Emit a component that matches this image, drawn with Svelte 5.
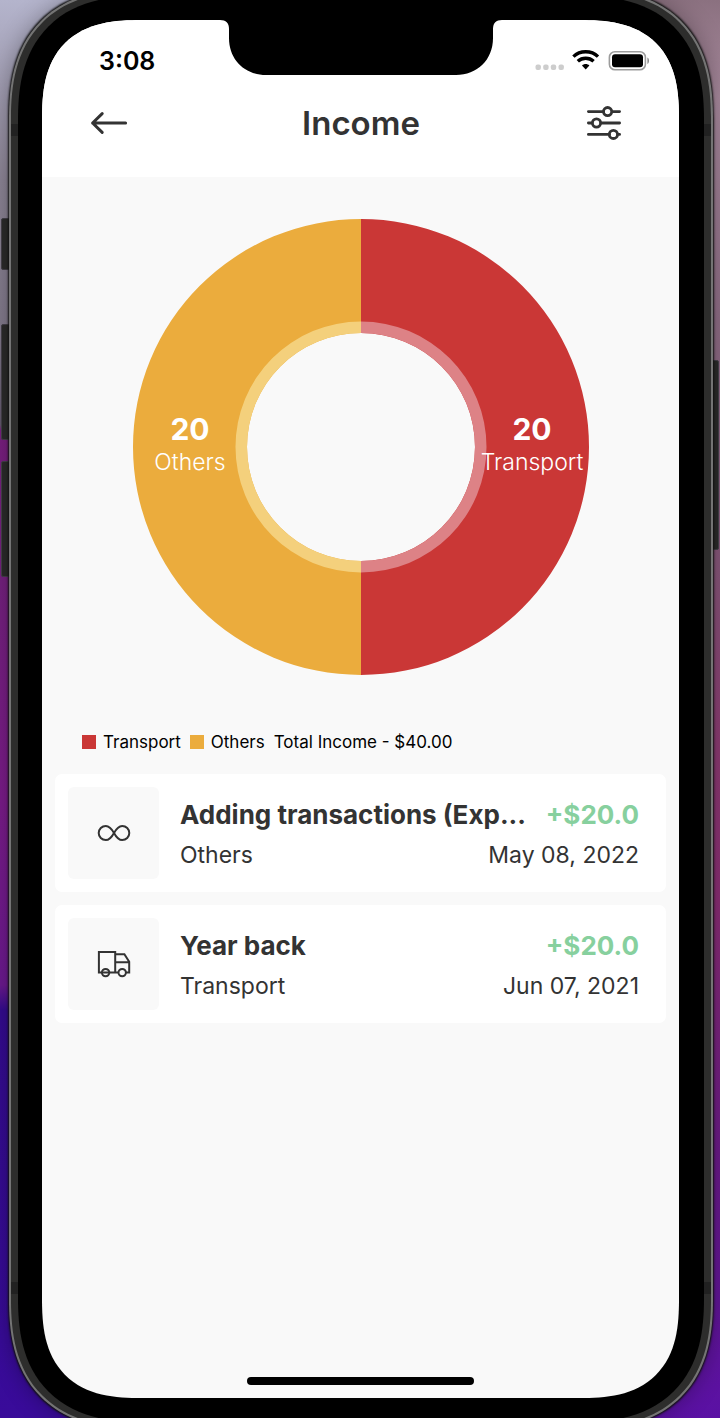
<script>
  const slices = [
    { name: 'Others', value: 20, color: '#ebac3d', ring: '#f4d07c', cx: 57, path: 'M228 0A228 228 0 0 0 228 456V342A114 114 0 0 1 228 114Z', inner: 'M228 102.5A125.5 125.5 0 0 0 228 353.5V342A114 114 0 0 1 228 114Z' },
    { name: 'Transport', value: 20, color: '#ca3736', ring: '#dd8286', cx: 399, path: 'M228 0A228 228 0 0 1 228 456V342A114 114 0 0 0 228 114Z', inner: 'M228 102.5A125.5 125.5 0 0 1 228 353.5V342A114 114 0 0 0 228 114Z' }
  ];
  const legend = [
    { name: 'Transport', color: '#ca3736' },
    { name: 'Others', color: '#ebac3d' }
  ];
  const transactions = [
    { title: 'Adding transactions (Exp...', category: 'Others', amount: '+$20.0', date: 'May 08, 2022', icon: 'infinity' },
    { title: 'Year back', category: 'Transport', amount: '+$20.0', date: 'Jun 07, 2021', icon: 'truck' }
  ];
</script>

<div class="desktop">
  <span class="key mute"></span>
  <span class="key up"></span>
  <span class="key down"></span>
  <span class="key power"></span>
  <div class="phone">
    <span class="band tl"></span>
    <span class="band tr"></span>
    <span class="band bl"></span>
    <span class="band br"></span>
    <div class="bezel">
      <div class="screen">
        <svg class="notch" width="282" height="55" viewBox="0 0 282 55" aria-hidden="true">
          <path d="M0 0H282C276 0 273 3 273 9V18C273 40 257 55 236 55H46C25 55 9 40 9 18V9C9 3 6 0 0 0Z" fill="#000" />
        </svg>
        <header>
          <div class="status">
            <time>3:08</time>
            <svg width="116" height="24" viewBox="0 0 116 24" aria-hidden="true">
              <g fill="#cdcdcd">
                <rect x="1.5" y="15.6" width="5.4" height="5.4" rx="2" />
                <rect x="9.2" y="15.6" width="5.4" height="5.4" rx="2" />
                <rect x="16.8" y="15.6" width="5.4" height="5.4" rx="2" />
                <rect x="24.5" y="15.6" width="5.4" height="5.4" rx="2" />
              </g>
              <g fill="none" stroke="#000" stroke-width="3.4">
                <path d="M39.4 7.6C46 1.2 57.4 1.2 64 7.6" />
                <path d="M43.8 12.2C48.2 8.2 55.2 8.2 59.6 12.2" />
              </g>
              <path d="M48 16.4C50 14.4 53.4 14.4 55.4 16.4L51.7 20.6Z" />
              <rect x="75.4" y="2.8" width="36" height="18" rx="5.5" fill="none" stroke="#9c9c9c" stroke-width="1.6" />
              <rect x="78" y="5.3" width="31" height="13" rx="3" />
              <path d="M113.4 8.4C115.6 9.3 115.6 14.1 113.4 15Z" fill="#8c8c8c" />
            </svg>
          </div>
          <div class="bar">
            <button aria-label="Back">
              <svg width="38" height="24" viewBox="0 0 38 24" fill="none" stroke="#333" stroke-width="3" stroke-linecap="round" stroke-linejoin="round">
                <path d="M35.6 12H2.6M12.2 2.6L2.6 12L12.2 21.4" />
              </svg>
            </button>
            <h1>Income</h1>
            <button aria-label="Filters">
              <svg width="36" height="36" viewBox="0 0 36 36" fill="none" stroke="#333" stroke-width="2.8" stroke-linecap="round">
                <path d="M2.4 6.6H17.5M26.5 6.6H33.6M2.4 18H6M15 18H33.6M2.4 29.4H23.5M32.5 29.4H33.6" />
                <circle cx="21.6" cy="6.6" r="4.1" />
                <circle cx="10.5" cy="18" r="4.1" />
                <circle cx="27.4" cy="29.4" r="4.1" />
              </svg>
            </button>
          </div>
        </header>
        <main>
          <svg class="chart" width="456" height="456" viewBox="0 0 456 456" role="img">
            {#each slices as s}
              <path d={s.path} fill={s.color} />
              <path d={s.inner} fill={s.ring} />
              <text class="value" x={s.cx} y="221">{s.value}</text>
              <text class="name" x={s.cx} y="251">{s.name}</text>
            {/each}
          </svg>
          <div class="legend">
            {#each legend as l}
              <span class="entry"><i style="background: {l.color}"></i>{l.name}</span>
            {/each}
            <span>Total Income - $40.00</span>
          </div>
          <ul>
            {#each transactions as t}
              <li>
                <div class="tile">
                  {#if t.icon === 'infinity'}
                    <svg width="34" height="18" viewBox="0 0 34 18" fill="none" stroke="#333" stroke-width="2">
                      <path d="M17 9C14.4 4.2 12.2 1.9 8.8 1.9A7.1 7.1 0 0 0 8.8 16.1C12.2 16.1 14.4 13.8 17 9C19.6 4.2 21.8 1.9 25.2 1.9A7.1 7.1 0 0 1 25.2 16.1C21.8 16.1 19.6 13.8 17 9Z" />
                    </svg>
                  {:else}
                    <svg width="34" height="28" viewBox="0 0 34 28" fill="none" stroke="#333" stroke-width="2">
                      <path d="M5 22.6H1.9V2H18.2V22.6M11.5 22.6H22M29 22.6H32.2V11.8L27.4 4.2H18.2M18.2 12.2H32M5 22.6H12" />
                      <circle cx="8.6" cy="22.6" r="3.7" />
                      <circle cx="25.2" cy="22.6" r="3.7" />
                    </svg>
                  {/if}
                </div>
                <div class="info">
                  <div class="line"><strong>{t.title}</strong><strong class="amount">{t.amount}</strong></div>
                  <div class="line"><span>{t.category}</span><time>{t.date}</time></div>
                </div>
              </li>
            {/each}
          </ul>
        </main>
        <span class="home"></span>
      </div>
    </div>
  </div>
</div>

<style>
  :global(body) {
    margin: 0;
  }
  .desktop {
    position: relative;
    box-sizing: border-box;
    min-height: 100vh;
    padding: 0 7px 0 9px;
    overflow: hidden;
    font-family: Inter, sans-serif;
    color: #333;
    background:
      linear-gradient(#b4b4cc, #8d8596 180px, #827a8c 330px, #60566a 425px, #7a1f80 430px, #75217f 580px, #7b1c8a 800px, #6c1a90 985px, #340c90 1010px, #390b9a 1418px) left / 50% 100% no-repeat,
      linear-gradient(#8b7180, #a98a9e 100px, #8f6d86 320px, #87577a 560px, #8c3a72 750px, #8a2d74 900px, #6b1a88 1150px, #5a11a4 1418px) right / 50% 100% no-repeat;
  }
  .key {
    position: absolute;
    left: 1px;
    width: 9px;
    box-sizing: border-box;
    border: 1px solid #45414a;
    border-radius: 2px;
    background: #2b2b2a;
  }
  .mute { top: 218px; height: 52px; }
  .up { top: 324px; height: 116px; }
  .down { top: 461px; height: 116px; }
  .power { top: 360px; height: 190px; left: auto; right: 1px; }
  .phone {
    position: relative;
    margin: -11px 0;
    padding: 5px 7px;
    border: 2px solid #747474;
    border-radius: 108px;
    background: #2d2d2c;
    box-shadow: 0 0 2px 1px #111, 0 0 24px #0005;
  }
  .band {
    position: absolute;
    width: 7px;
    height: 12px;
    background: #212121;
  }
  .tl { left: 0; top: 133px; }
  .tr { right: 0; top: 133px; }
  .bl { left: 0; bottom: 133px; }
  .br { right: 0; bottom: 133px; }
  .bezel {
    position: relative;
    padding: 24px 25px 24px 24px;
    border-radius: 102px;
    background: #000;
  }
  .screen {
    position: relative;
    box-sizing: border-box;
    display: flex;
    flex-direction: column;
    min-height: calc(100vh - 40px);
    padding-bottom: 13px;
    overflow: hidden;
    border-radius: 78px;
    background: #f9f9f9;
  }
  @supports (corner-shape: superellipse(1.4)) {
    .screen { border-radius: 100px; corner-shape: superellipse(1.4); }
    .bezel { border-radius: 124px; corner-shape: superellipse(1.3); }
    .phone { border-radius: 130px; corner-shape: superellipse(1.3); }
  }
  .notch {
    position: absolute;
    top: 0;
    left: 50%;
    transform: translateX(-50%);
  }
  header {
    background: #fff;
    padding: 28px 29px 31px 48px;
  }
  .status {
    display: flex;
    align-items: center;
    justify-content: space-between;
    height: 25px;
    padding-left: 9px;
    font-size: 25px;
    font-weight: 600;
    color: #000;
  }
  .bar {
    display: grid;
    grid-template-columns: 46px 1fr 46px;
    align-items: center;
    margin-top: 27px;
    height: 46px;
    padding-right: 18px;
  }
  h1 {
    margin: 0;
    font-size: 33px;
    font-weight: 600;
    line-height: 40px;
    text-align: center;
  }
  button {
    display: flex;
    justify-content: flex-start;
    padding: 0;
    border: 0;
    background: none;
  }
  main {
    display: flex;
    flex-direction: column;
    padding: 42px 13px 0;
  }
  .chart {
    align-self: center;
    max-width: 100%;
  }
  text {
    fill: #fff;
    text-anchor: middle;
  }
  .value {
    font-size: 30px;
    font-weight: 700;
  }
  .name {
    font-size: 23px;
    font-weight: 300;
  }
  .legend {
    display: flex;
    align-items: center;
    gap: 9px;
    margin: 57px 27px 22px;
    font-size: 17px;
    line-height: 20px;
    color: #000;
  }
  .entry {
    display: flex;
    align-items: center;
    gap: 7px;
  }
  i {
    width: 14px;
    height: 14px;
  }
  ul {
    display: grid;
    gap: 13px;
    margin: 0;
    padding: 0;
    list-style: none;
  }
  li {
    display: flex;
    align-items: center;
    gap: 21px;
    padding: 13px 27px 13px 13px;
    border-radius: 7px;
    background: #fff;
  }
  .tile {
    display: grid;
    flex: none;
    place-items: center;
    width: 91px;
    height: 92px;
    border-radius: 6px;
    background: #f9f9f9;
  }
  .info {
    flex: 1;
    min-width: 0;
    padding-top: 4px;
  }
  .line {
    display: flex;
    justify-content: space-between;
    gap: 12px;
    font-size: 23px;
    line-height: 40px;
    white-space: nowrap;
  }
  strong {
    overflow: hidden;
    font-size: 26px;
    font-weight: 700;
    text-overflow: ellipsis;
  }
  .amount {
    flex: none;
    color: #87d09e;
  }
  .home {
    width: 227px;
    height: 8px;
    margin: auto auto 0;
    border-radius: 4px;
    background: #000;
  }
</style>
